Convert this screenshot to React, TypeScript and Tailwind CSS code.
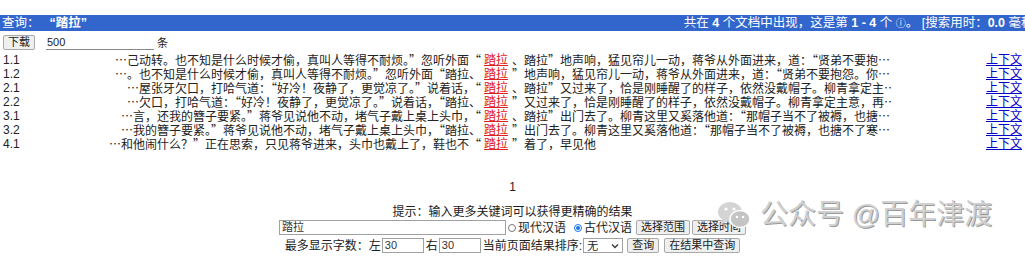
import type { ReactNode } from "react";

const rows: { no: string; left: string; right: string }[] = [
  { no: "1.1", left: "…己动转。也不知是什么时候才偷，真叫人等得不耐烦。”忽听外面“", right: "、踏拉”地声响，猛见帘儿一动，蒋爷从外面进来，道：“贤弟不要抱…" },
  { no: "1.2", left: "…。也不知是什么时候才偷，真叫人等得不耐烦。”忽听外面“踏拉、", right: "”地声响，猛见帘儿一动，蒋爷从外面进来，道：“贤弟不要抱怨。你…" },
  { no: "2.1", left: "…屋张牙欠口，打哈气道：“好冷！夜静了，更觉凉了。”说着话，“", right: "、踏拉”又过来了，恰是刚睡醒了的样子，依然没戴帽子。柳青拿定主…" },
  { no: "2.2", left: "…欠口，打哈气道：“好冷！夜静了，更觉凉了。”说着话，“踏拉、", right: "”又过来了，恰是刚睡醒了的样子，依然没戴帽子。柳青拿定主意，再…" },
  { no: "3.1", left: "…言，还我的簪子要紧。”蒋爷见说他不动，堵气子戴上桌上头巾，“", right: "、踏拉”出门去了。柳青这里又奚落他道：“那帽子当不了被褥，也搪…" },
  { no: "3.2", left: "…我的簪子要紧。”蒋爷见说他不动，堵气子戴上桌上头巾，“踏拉、", right: "”出门去了。柳青这里又奚落他道：“那帽子当不了被褥，也搪不了寒…" },
  { no: "4.1", left: "…和他闹什么？”正在思索，只见蒋爷进来，头巾也戴上了，鞋也不“", right: "”着了，早见他" },
];

function Btn({ children }: { children: ReactNode }) {
  return (
    <button className="h-[15px] rounded-[2px] border border-[#a9a9a9] bg-[#efefef] px-[4px] text-[11px] leading-[13px] text-[#222]">
      {children}
    </button>
  );
}

function Field({ value, className }: { value: string; className: string }) {
  return (
    <div className={`h-[15px] border border-[#a0a0a0] bg-white px-[2px] text-[11px] leading-[13px] text-[#333] ${className}`}>
      {value}
    </div>
  );
}

export default function App() {
  return (
    <div className="relative h-[259px] w-[1025px] overflow-hidden bg-white pt-[15px] text-[12px] leading-[14px] text-[#222] [font-family:'Liberation_Sans','Noto_Sans_CJK_SC',sans-serif]">
      <div className="flex h-[16px] items-center justify-between whitespace-nowrap bg-[#3366cc] pl-[2px] text-[12.5px] text-white">
        <div>
          查询：<span className="ml-[10px] font-bold">“踏拉”</span>
        </div>
        <div className="-mr-[12px]">
          共在 <b>4</b> 个文档中出现，这是第 <b>1 - 4</b> 个 <span className="text-[10px]">ⓘ</span>。 [搜索用时：<b>0.0</b> 毫秒]
        </div>
      </div>

      <div className="mt-[4px] flex h-[15px] items-center pl-[3px]">
        <Btn>下载</Btn>
        <div className="ml-[11px] w-[108px] border-b border-[#888] pl-[1px] text-[11px] leading-[13px]">500</div>
        <span className="ml-[3px] text-[11px]">条</span>
      </div>

      <div className="mt-[3px]">
        {rows.map((r) => (
          <div key={r.no} className="grid h-[14px] grid-cols-[107px_374px_30px_380px_1fr] whitespace-nowrap">
            <div className="pl-[3px]">{r.no}</div>
            <div className="flex justify-end overflow-hidden [font-family:'Noto_Sans_CJK_SC',sans-serif]">{r.left}</div>
            <div className="text-center">
              <span className="text-[#e02020] underline">踏拉</span>
            </div>
            <div className="overflow-hidden pl-[1px] [font-family:'Noto_Sans_CJK_SC',sans-serif]">{r.right}</div>
            <div className="flex justify-end pr-[3px]">
              <a href="#" className="text-[#0000cc] underline">上下文</a>
            </div>
          </div>
        ))}
      </div>

      <div className="mt-[29px] text-center text-[12px] leading-[14px]">1</div>

      <div className="mt-[11px] text-center text-[12px] leading-[14px]">提示：输入更多关键词可以获得更精确的结果</div>

      <div className="mt-[1px] flex items-center justify-center gap-[2px] text-[12px] leading-[14px]">
        <Field value="踏拉" className="w-[227px]" />
        <label className="flex items-center">
          <span className="mr-[2px] inline-block h-[8px] w-[8px] rounded-full border border-[#777] bg-white" />
          现代汉语
        </label>
        <label className="ml-[6px] mr-[2px] flex items-center">
          <span className="mr-[2px] inline-flex h-[8px] w-[8px] items-center justify-center rounded-full border border-[#1a73e8] bg-white">
            <span className="h-[4px] w-[4px] rounded-full bg-[#1a73e8]" />
          </span>
          古代汉语
        </label>
        <Btn>选择范围</Btn>
        <Btn>选择时间</Btn>
      </div>

      <div className="mt-[3px] flex items-center justify-center gap-[1px] text-[12px] leading-[14px]">
        <span>最多显示字数：左</span>
        <Field value="30" className="w-[42px]" />
        <span className="ml-[1px]">右</span>
        <Field value="30" className="w-[42px]" />
        <span className="ml-[1px]">当前页面结果排序:</span>
        <div className="mr-[3px] flex h-[15px] w-[40px] items-center justify-between border border-[#a0a0a0] px-[3px] text-[11px]">
          <span>无</span>
          <svg width="8" height="6" viewBox="0 0 8 6"><path d="M1 1.5 4 4.5 7 1.5" fill="none" stroke="#333" strokeWidth="1.3" /></svg>
        </div>
        <Btn>查询</Btn>
        <span className="w-[3px]" />
        <Btn>在结果中查询</Btn>
      </div>

      <div className="absolute left-[716px] top-[199px] flex items-center gap-[8px] whitespace-nowrap">
        <svg width="36" height="32" viewBox="0 0 36 32">
          <ellipse cx="14" cy="13" rx="12" ry="10" fill="#d4d4d4" />
          <path d="M6 20 4 26 11 22z" fill="#d4d4d4" />
          <ellipse cx="24" cy="20" rx="10" ry="8.5" fill="#c4c4c4" stroke="#fff" strokeWidth="1.5" />
          <circle cx="10" cy="10" r="1.6" fill="#fff" />
          <circle cx="18" cy="10" r="1.6" fill="#fff" />
          <circle cx="21" cy="18" r="1.3" fill="#fff" />
          <circle cx="27" cy="18" r="1.3" fill="#fff" />
        </svg>
        <span className="text-[28px] leading-[30px] text-[#d0d0d0] [text-shadow:1px_1px_0_#9a9a9a]">公众号 @百年津渡</span>
      </div>
    </div>
  );
}
